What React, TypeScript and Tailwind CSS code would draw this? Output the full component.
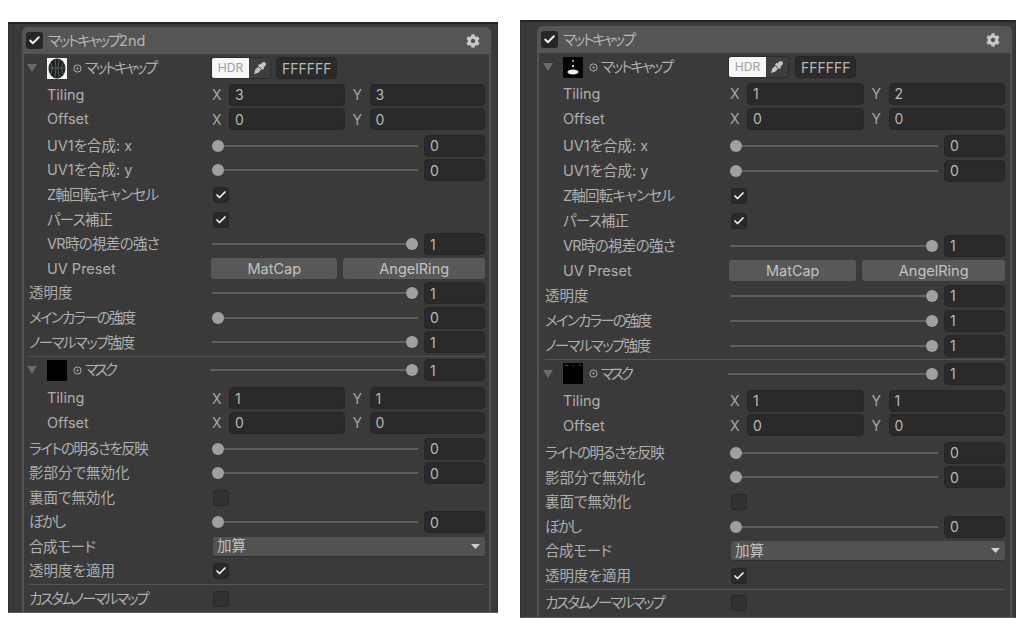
import { Check } from "lucide-react";
import { FaCog, FaEyeDropper } from "react-icons/fa";
import type { ReactNode } from "react";

const FONT = "font-['Inter','Noto_Sans_CJK_JP',sans-serif] [font-feature-settings:'palt']";

function Box({ children }: { children?: ReactNode }) {
    return (
        <div className="flex h-[22px] min-w-0 flex-1 items-center rounded-[4px] border border-[#262626] bg-[#2a2a2a] px-[5px] text-[14px] text-[#b8b8b8]">
            {children}
        </div>
    );
}

function Row({ label, indent, rh, tr = "", children }: { label: string; indent?: boolean; rh: string; tr?: string; children?: ReactNode }) {
    return (
        <div className={`flex items-center ${rh}`}>
            <div className={`w-[var(--lw)] shrink-0 text-[14.5px] whitespace-nowrap text-[#aeaeae] ${indent ? "pl-[18px]" : ""} ${tr}`}>
                {label}
            </div>
            <div className="flex min-w-0 flex-1 items-center">{children}</div>
        </div>
    );
}

function Slider({ max, value }: { max?: boolean; value: string }) {
    return (
        <>
            <div className="relative h-[2px] flex-1 bg-[#5e5e5e]">
                <div className={`absolute top-[-5px] h-[12px] w-[12px] rounded-full bg-[#a0a0a0] ${max ? "right-0" : "left-0"}`} />
            </div>
            <div className="ml-[6px] w-[61px]">
                <Box>{value}</Box>
            </div>
        </>
    );
}

function CheckBox({ on }: { on?: boolean }) {
    return (
        <div className={`ml-[1px] flex h-[16px] w-[16px] items-center justify-center rounded-[3px] border border-[#282828] ${on ? "bg-[#2a2a2a]" : "bg-[#313131]"}`}>
            {on && <Check size={12} strokeWidth={3.5} className="text-[#f0f0f0]" />}
        </div>
    );
}

function Pair({ x, y }: { x: string; y: string }) {
    return (
        <>
            <span className="w-[17px] shrink-0 text-[14px] text-[#a6a6a6]">X</span>
            <Box>{x}</Box>
            <span className="ml-[8px] w-[17px] shrink-0 text-[14px] text-[#a6a6a6]">Y</span>
            <Box>{y}</Box>
        </>
    );
}

function Arrow() {
    return (
        <svg width="10" height="8" viewBox="0 0 10 8" className="-ml-[2px] shrink-0">
            <path d="M0 0h10L5 8z" fill="#6a6a6a" />
        </svg>
    );
}

function Dot() {
    return (
        <svg width="9" height="9" viewBox="0 0 9 9" className="shrink-0">
            <circle cx="4.5" cy="4.5" r="3.6" fill="none" stroke="#aeaeae" />
            <circle cx="4.5" cy="4.5" r="1" fill="#aeaeae" />
        </svg>
    );
}

function SphereThumb() {
    return (
        <svg width="20" height="21" viewBox="0 0 20 21" className="shrink-0">
            <rect width="20" height="21" fill="#f4f4f4" />
            <ellipse cx="10" cy="10.5" rx="8.5" ry="10" fill="#1d2323" />
            <path d="M4 5q3 5 0 11M8 2q2 8 0 17M12 2q-2 8 0 17M16 5q-3 5 0 11M2 10h16" stroke="#56605e" strokeWidth="1" fill="none" />
        </svg>
    );
}

function SparkThumb() {
    return (
        <svg width="20" height="21" viewBox="0 0 20 21" className="shrink-0">
            <rect width="20" height="21" fill="#050505" />
            <ellipse cx="10" cy="15" rx="5.5" ry="2.6" fill="#f2f2f2" />
            <circle cx="10" cy="4" r="0.9" fill="#dddddd" />
            <circle cx="10" cy="9" r="1.2" fill="#cccccc" />
        </svg>
    );
}

function MaskThumb({ spark }: { spark?: boolean }) {
    return (
        <svg width="20" height="21" viewBox="0 0 20 21" className="shrink-0">
            <rect width="20" height="21" fill="#000000" />
            {spark && <path d="M2 2l3 1M16 1l2 2M10 3h1" stroke="#555555" />}
        </svg>
    );
}

function TexHead({ thumb, label, cls, tr }: { thumb: ReactNode; label: string; cls: string; tr: string }) {
    return (
        <div className={`flex shrink-0 items-center text-[14.5px] whitespace-nowrap text-[#aeaeae] ${cls}`}>
            <Arrow />
            <div className="ml-[10px]">{thumb}</div>
            <div className="ml-[6px] flex items-center gap-[3px]">
                <Dot />
                <span className={tr}>{label}</span>
            </div>
        </div>
    );
}

interface PanelProps {
    title: string;
    suffix?: string;
    thumb: ReactNode;
    maskSpark?: boolean;
    tiling: [string, string];
    mainColor: { max: boolean; value: string };
    outer: string;
    inner: string;
    head: string;
    rh: string;
    rh2: string;
    matRow: string;
    gapB: string;
    gapC: string;
    thumbPad: string;
    maskTrack: string;
    hdr: string;
    hex: string;
    vars: string;
}

function Panel(p: PanelProps) {
    const { rh, rh2 } = p;
    return (
        <div className={`flex shrink-0 flex-col border-x border-t-2 border-b border-x-[#303030] border-t-[#252525] border-b-[#5c5c5c] bg-[#3a3a3a] ${p.outer} ${p.vars}`}>
            <div className={`flex shrink-0 items-center rounded-t-[6px] bg-[#555555] ${p.head}`}>
                <div className="flex h-[17px] w-[17px] items-center justify-center rounded-[3px] bg-[#262626]">
                    <Check size={13} strokeWidth={3.5} className="text-[#f2f2f2]" />
                </div>
                <span className="ml-[5px] flex-1 text-[14.5px] text-[#b6b6b6]">
                    <span className="tracking-[-2.1px]">{p.title}</span>
                    {p.suffix}
                </span>
                <FaCog size={14} className="text-[#c8c8c8]" />
            </div>
            <div className={`flex-1 border-x-2 border-[#525252] ${p.inner}`}>
                <div className={`flex items-center ${p.matRow}`}>
                    <TexHead thumb={p.thumb} label="マットキャップ" cls={p.thumbPad} tr="tracking-[-2.1px]" />
                    <div className={`flex h-[22px] shrink-0 overflow-hidden rounded-[3px] border border-[#2c2c2c] ${p.hdr}`}>
                        <div className="flex w-[37px] items-center justify-center bg-[#f6f6f6] text-[12px] text-[#a0a0a0]">HDR</div>
                        <div className="flex flex-1 items-center justify-center bg-[#3e3e3e]">
                            <FaEyeDropper size={12} className="text-[#c4c4c4]" />
                        </div>
                    </div>
                    <div className={`w-[61px] shrink-0 ${p.hex}`}>
                        <Box>FFFFFF</Box>
                    </div>
                </div>
                <Row label="Tiling" indent rh={rh}>
                    <Pair x={p.tiling[0]} y={p.tiling[1]} />
                </Row>
                <Row label="Offset" indent rh={rh}>
                    <Pair x="0" y="0" />
                </Row>
                <div className="h-[2px]" />
                <Row label="UV1を合成: x" indent rh={rh}>
                    <Slider value="0" />
                </Row>
                <Row label="UV1を合成: y" indent rh={rh}>
                    <Slider value="0" />
                </Row>
                <Row label="Z軸回転キャンセル" indent rh={rh} tr="tracking-[-0.8px]">
                    <CheckBox on />
                </Row>
                <Row label="パース補正" indent rh={rh} tr="tracking-[-0.8px]">
                    <CheckBox on />
                </Row>
                <Row label="VR時の視差の強さ" indent rh={rh} tr="tracking-[-0.7px]">
                    <Slider max value="1" />
                </Row>
                <Row label="UV Preset" indent rh={rh}>
                    <div className="-ml-[1px] flex h-[21px] flex-1 gap-[6px] text-[14.5px] text-[#c2c2c2]">
                        <div className="flex flex-[126] items-center justify-center rounded-[3px] bg-[#585858]">MatCap</div>
                        <div className="flex flex-[141] items-center justify-center rounded-[3px] bg-[#585858]">AngelRing</div>
                    </div>
                </Row>
                <Row label="透明度" rh={rh}>
                    <Slider max value="1" />
                </Row>
                <Row label="メインカラーの強度" rh={rh} tr="tracking-[-1.8px]">
                    <Slider max={p.mainColor.max} value={p.mainColor.value} />
                </Row>
                <Row label="ノーマルマップ強度" rh={rh} tr="tracking-[-1.6px]">
                    <Slider max value="1" />
                </Row>
                <div className="mt-[1px] h-[1px] bg-[#555555]" />
                <div className="flex h-[27px] items-center">
                    <TexHead thumb={<MaskThumb spark={p.maskSpark} />} label="マスク" cls={p.maskTrack} tr="tracking-[-3px]" />
                    <Slider max value="1" />
                </div>
                <div className={p.gapB} />
                <Row label="Tiling" indent rh={rh2}>
                    <Pair x="1" y="1" />
                </Row>
                <Row label="Offset" indent rh={rh2}>
                    <Pair x="0" y="0" />
                </Row>
                <div className={p.gapC} />
                <Row label="ライトの明るさを反映" rh={rh2} tr="tracking-[-1.5px]">
                    <Slider value="0" />
                </Row>
                <Row label="影部分で無効化" rh={rh2}>
                    <Slider value="0" />
                </Row>
                <Row label="裏面で無効化" rh={rh2}>
                    <CheckBox />
                </Row>
                <Row label="ぼかし" rh={rh2} tr="tracking-[-2px]">
                    <Slider value="0" />
                </Row>
                <Row label="合成モード" rh={rh2} tr="tracking-[-0.4px]">
                    <div className="ml-[1px] flex h-[20px] flex-1 items-center justify-between rounded-[3px] border-b border-[#2e2e2e] bg-[#525252] pr-[5px] pl-[4px] text-[14.5px] tracking-normal text-[#c0c0c0]">
                        加算
                        <svg width="9" height="5" viewBox="0 0 9 5">
                            <path d="M0 0h9L4.5 5z" fill="#cfcfcf" />
                        </svg>
                    </div>
                </Row>
                <Row label="透明度を適用" rh={rh2}>
                    <CheckBox on />
                </Row>
                <div className="mt-[1px] mb-[1px] h-[1px] bg-[#555555]" />
                <Row label="カスタムノーマルマップ" rh={rh2} tr="tracking-[-2.2px]">
                    <CheckBox />
                </Row>
            </div>
        </div>
    );
}

export default function App() {
    return (
        <div className={`flex h-[640px] w-[1024px] items-start overflow-hidden bg-white ${FONT}`}>
            <Panel
                title="マットキャップ"
                suffix="2nd"
                thumb={<SphereThumb />}
                tiling={["3", "3"]}
                mainColor={{ max: false, value: "0" }}
                outer="ml-[8px] mt-[22px] h-[591px] w-[490px] pl-[13px] pr-[6px] pt-[3px]"
                inner="pl-[5px] pr-[4px]"
                head="h-[27px] pl-[4px] pr-[11px]"
                rh="h-[24.6px]"
                rh2="h-[24.5px]"
                matRow="h-[28.25px]"
                gapB="h-[2px]"
                gapC="h-[1.5px]"
                thumbPad="w-[182px]"
                maskTrack="w-[181px]"
                hdr="w-[60px]"
                hex="ml-[5px]"
                vars="[--lw:183px]"
            />
            <Panel
                title="マットキャップ"
                thumb={<SparkThumb />}
                maskSpark
                tiling={["1", "2"]}
                mainColor={{ max: true, value: "1" }}
                outer="ml-[22px] mt-[20px] h-[598px] w-[496px] pl-[16px] pr-[3px] pt-[4px]"
                inner="pl-[6px] pr-[5px]"
                head="h-[27px] pl-[4px] pr-[12px]"
                rh="h-[25px]"
                rh2="h-[24.6px]"
                matRow="h-[28px]"
                gapB="h-[1.5px]"
                gapC="h-[2.8px]"
                thumbPad="w-[183px]"
                maskTrack="w-[183px]"
                hdr="w-[61px]"
                hex="ml-[6px]"
                vars="[--lw:185px]"
            />
        </div>
    );
}
